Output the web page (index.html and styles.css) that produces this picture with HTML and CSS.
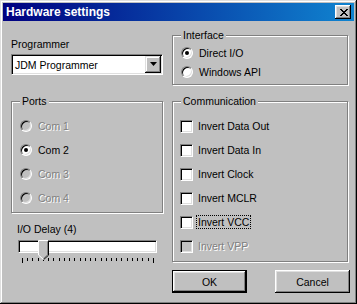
FILE: index.html
```html
<!DOCTYPE html>
<html lang="en">
<head>
    <meta charset="UTF-8">
    <meta name="viewport" content="width=device-width, initial-scale=1.0">
    <title>Hardware settings</title>
    <link rel="stylesheet" href="styles.css">
</head>
<body>
    <div class="window">
        <div class="titlebar">
            <span class="title">Hardware settings</span>
            <button class="close-btn">
                <svg width="8" height="7" viewBox="0 0 8 7"><path d="M0 0h2v1H0zM6 0h2v1H6zM1 1h2v1H1zM5 1h2v1H5zM2 2h4v1H2zM3 3h2v1H3zM2 4h4v1H2zM1 5h2v1H1zM5 5h2v1H5zM0 6h2v1H0zM6 6h2v1H6z" fill="#000"/></svg>
            </button>
        </div>

        <div class="dialog">
            <div class="col-left">
                <div class="label">Programmer</div>
                <div class="combo">
                    <span class="combo-text">JDM Programmer</span>
                    <span class="combo-btn">
                        <svg width="7" height="4" viewBox="0 0 7 4"><path d="M0 0h7L3.5 4z" fill="#000"/></svg>
                    </span>
                </div>

                <div class="group ports">
                    <span class="group-title">Ports</span>
                    <div class="option disabled"><span class="radio"></span>Com 1</div>
                    <div class="option"><span class="radio checked"></span>Com 2</div>
                    <div class="option disabled"><span class="radio"></span>Com 3</div>
                    <div class="option disabled"><span class="radio"></span>Com 4</div>
                </div>

                <div class="label delay-label">I/O Delay (4)</div>
                <div class="slider">
                    <div class="track"></div>
                    <svg class="thumb" width="11" height="20" viewBox="0 0 11 20">
                        <path d="M0 0h11v15l-5.5 5L0 15z" fill="#c0c0c0"/>
                        <path d="M0.5 15V0.5h10" stroke="#fff" fill="none"/>
                        <path d="M10.5 0.5v14.7L5.5 19.7" stroke="#000" fill="none"/>
                        <path d="M9.5 1.5v13.3L5.5 18.5" stroke="#808080" fill="none"/>
                        <path d="M0.5 15l5 4.5" stroke="#fff" fill="none"/>
                    </svg>
                    <div class="ticks">
                        <span class="tick long"></span><span class="tick"></span><span class="tick"></span><span class="tick"></span><span class="tick"></span>
                        <span class="tick"></span><span class="tick"></span><span class="tick"></span><span class="tick"></span><span class="tick"></span>
                        <span class="tick"></span><span class="tick"></span><span class="tick"></span><span class="tick"></span><span class="tick"></span>
                        <span class="tick"></span><span class="tick"></span><span class="tick"></span><span class="tick"></span><span class="tick"></span>
                        <span class="tick"></span><span class="tick"></span><span class="tick"></span><span class="tick"></span><span class="tick"></span>
                        <span class="tick long"></span>
                    </div>
                </div>
            </div>

            <div class="col-right">
                <div class="group interface">
                    <span class="group-title">Interface</span>
                    <div class="option short"><span class="radio checked"></span>Direct I/O</div>
                    <div class="option short"><span class="radio"></span>Windows API</div>
                </div>

                <div class="group communication">
                    <span class="group-title">Communication</span>
                    <div class="option"><span class="check"></span>Invert Data Out</div>
                    <div class="option"><span class="check"></span>Invert Data In</div>
                    <div class="option"><span class="check"></span>Invert Clock</div>
                    <div class="option"><span class="check"></span>Invert MCLR</div>
                    <div class="option"><span class="check"></span><span class="focus">Invert VCC</span></div>
                    <div class="option disabled"><span class="check"></span>Invert VPP</div>
                </div>

                <div class="button-row">
                    <button class="btn default">OK</button>
                    <button class="btn">Cancel</button>
                </div>
            </div>
        </div>
    </div>
</body>
</html>
```

FILE: styles.css
```css
body {
    margin: 0;
    background-color: #c0c0c0;
    font-family: "Liberation Sans", Arial, sans-serif;
    font-size: 10.5px;
    color: #000;
}
.window {
    box-sizing: border-box;
    width: 357px;
    height: 304px;
    padding: 3px;
    background-color: #c0c0c0;
    box-shadow: inset -1px -1px #000, inset 1px 1px #dfdfdf, inset -2px -2px #808080, inset 2px 2px #fff;
}
.titlebar {
    display: flex;
    align-items: center;
    justify-content: space-between;
    height: 18px;
    padding: 0 3px 0 3px;
    background: linear-gradient(to right, #000080, #1084d0);
}
.title {
    color: #fff;
    font-weight: bold;
    font-size: 12px;
    line-height: 18px;
}
.close-btn {
    display: flex;
    align-items: center;
    justify-content: center;
    width: 16px;
    height: 14px;
    padding: 0 0 0 1px;
    border: none;
    background-color: #c0c0c0;
    box-shadow: inset -1px -1px #000, inset 1px 1px #fff, inset -2px -2px #808080, inset 2px 2px #dfdfdf;
}
.close-btn svg {
    display: block;
    shape-rendering: crispEdges;
}
.dialog {
    display: flex;
    gap: 9px;
    padding: 14px 0 0 8px;
}
.col-left {
    width: 152px;
}
.col-right {
    width: 178px;
}
.label {
    line-height: 13px;
    margin-top: 3px;
}
.combo {
    box-sizing: border-box;
    display: flex;
    align-items: center;
    justify-content: space-between;
    height: 21px;
    margin-top: 3px;
    padding: 2px;
    background-color: #fff;
    border: 1px solid;
    border-color: #808080 #fff #fff #808080;
    box-shadow: inset 1px 1px #000, inset -1px -1px #dfdfdf;
}
.combo-text {
    padding-left: 1px;
}
.combo-btn {
    display: flex;
    align-items: center;
    justify-content: center;
    width: 16px;
    height: 17px;
    margin-top: -1px;
    margin-right: -1px;
    background-color: #c0c0c0;
    box-shadow: inset -1px -1px #000, inset 1px 1px #dfdfdf, inset -2px -2px #808080, inset 2px 2px #fff;
}
.group {
    position: relative;
    box-sizing: border-box;
    border: 1px solid #808080;
    box-shadow: 1px 1px 0 #fff, inset 1px 1px 0 #fff;
}
.group-title {
    position: absolute;
    top: -7px;
    left: 8px;
    padding: 0 2px;
    line-height: 13px;
    background-color: #c0c0c0;
}
.ports {
    height: 112px;
    margin-top: 26px;
    padding: 12px 0 0 8px;
}
.interface {
    width: 176px;
    height: 50px;
    padding: 7px 0 0 8px;
}
.communication {
    width: 176px;
    height: 161px;
    margin-top: 16px;
    padding: 12px 0 0 7px;
}
.option {
    display: flex;
    align-items: center;
    height: 24px;
}
.option.short {
    height: 19px;
}
.option.disabled {
    color: #808080;
    text-shadow: 1px 1px 0 #fff;
}
.radio {
    position: relative;
    box-sizing: border-box;
    width: 12px;
    height: 12px;
    margin-right: 6px;
    border-radius: 50%;
    background-color: #fff;
    border: 1px solid;
    border-color: #808080 #fff #fff #808080;
    box-shadow: inset 1px 1px #000, inset -1px -1px #dfdfdf;
}
.radio.checked::after {
    content: "";
    position: absolute;
    left: 3px;
    top: 3px;
    width: 4px;
    height: 4px;
    border-radius: 50%;
    background-color: #000;
}
.check {
    box-sizing: border-box;
    width: 13px;
    height: 13px;
    margin-right: 5px;
    background-color: #fff;
    border: 1px solid;
    border-color: #808080 #fff #fff #808080;
    box-shadow: inset 1px 1px #000, inset -1px -1px #dfdfdf;
}
.disabled .radio,
.disabled .check {
    background-color: #c0c0c0;
}
.focus {
    margin-left: -2px;
    padding: 1px 2px;
    outline: 1px dotted #000;
    outline-offset: -1px;
}
.delay-label {
    margin-top: 10px;
    padding-left: 6px;
}
.slider {
    position: relative;
    height: 26px;
    margin-top: 4px;
}
.track {
    box-sizing: border-box;
    height: 13px;
    margin: 2px 6px 0 7px;
    background-color: #fff;
    border: 1px solid;
    border-color: #808080 #fff #fff #808080;
    box-shadow: inset 1px 1px #000, inset -1px -1px #dfdfdf;
}
.thumb {
    position: absolute;
    left: 27px;
    top: 0;
}
.ticks {
    display: flex;
    justify-content: space-between;
    align-items: flex-start;
    margin: 5px 9px 0 11px;
}
.tick {
    width: 1px;
    height: 3px;
    background-color: #000;
}
.tick.long {
    height: 5px;
}
.button-row {
    display: flex;
    justify-content: space-between;
    margin-top: 8px;
}
.btn {
    box-sizing: border-box;
    width: 75px;
    height: 23px;
    padding: 0;
    border: none;
    font-family: "Liberation Sans", Arial, sans-serif;
    font-size: 10.5px;
    color: #000;
    background-color: #c0c0c0;
    box-shadow: inset -1px -1px #000, inset 1px 1px #fff, inset -2px -2px #808080, inset 2px 2px #dfdfdf;
}
.btn.default {
    border: 1px solid #000;
}
```
